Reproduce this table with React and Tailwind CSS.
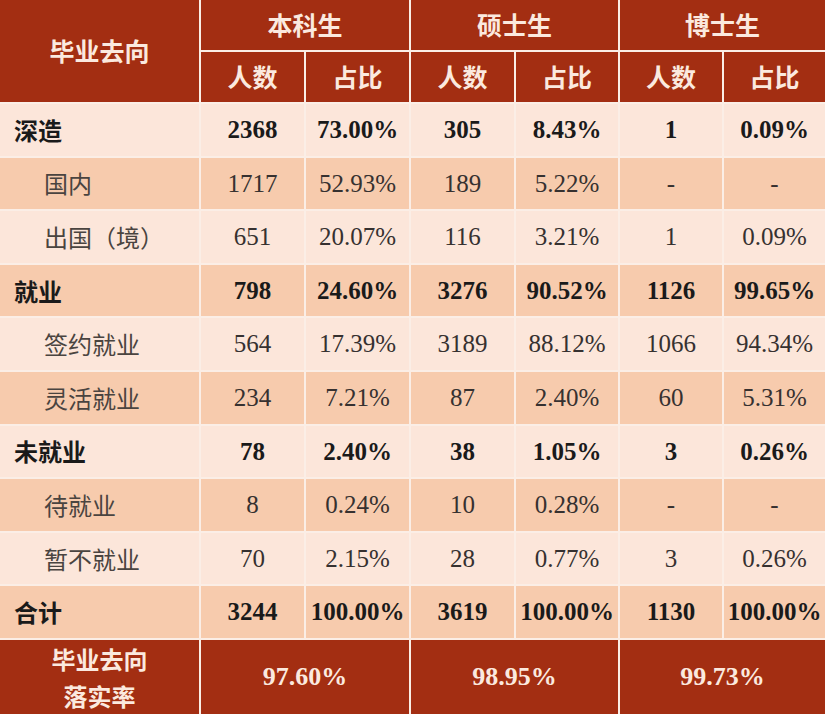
import React from "react";

const rows = [
  { label: "深造", bold: true, v: ["2368", "73.00%", "305", "8.43%", "1", "0.09%"] },
  { label: "国内", v: ["1717", "52.93%", "189", "5.22%", "-", "-"] },
  { label: "出国（境）", v: ["651", "20.07%", "116", "3.21%", "1", "0.09%"] },
  { label: "就业", bold: true, v: ["798", "24.60%", "3276", "90.52%", "1126", "99.65%"] },
  { label: "签约就业", v: ["564", "17.39%", "3189", "88.12%", "1066", "94.34%"] },
  { label: "灵活就业", v: ["234", "7.21%", "87", "2.40%", "60", "5.31%"] },
  { label: "未就业", bold: true, v: ["78", "2.40%", "38", "1.05%", "3", "0.26%"] },
  { label: "待就业", v: ["8", "0.24%", "10", "0.28%", "-", "-"] },
  { label: "暂不就业", v: ["70", "2.15%", "28", "0.77%", "3", "0.26%"] },
  { label: "合计", bold: true, v: ["3244", "100.00%", "3619", "100.00%", "1130", "100.00%"] },
];

const cjk = "font-['Noto_Sans_CJK_SC',sans-serif]";
const serif = "font-['Liberation_Serif','Noto_Sans_CJK_SC',serif]";

export default function App() {
  return (
    <div className="w-[825px] h-[714px] overflow-hidden bg-[#fbeee6]">
      <div className="grid grid-cols-[199px_103px_103px_103px_102px_102px_101px] grid-rows-[50px_50px_repeat(10,51.6px)_74px] gap-[2px]">
        <div className={`row-span-2 bg-[#a32e12] flex items-center justify-center text-[25px] font-bold text-[#fbe9df] ${cjk}`}>
          毕业去向
        </div>
        {["本科生", "硕士生", "博士生"].map((t) => (
          <div key={t} className={`col-span-2 bg-[#a32e12] flex items-center justify-center text-[25px] font-bold text-[#fbe9df] ${cjk}`}>
            {t}
          </div>
        ))}
        {[0, 1, 2, 3, 4, 5].map((i) => (
          <div key={i} className={`bg-[#a32e12] flex items-center justify-center text-[25px] font-bold text-[#fbe9df] ${cjk}`}>
            {i % 2 === 0 ? "人数" : "占比"}
          </div>
        ))}
        {rows.map((r, ri) => {
          const bg = ri % 2 === 0 ? "bg-[#fce6da]" : "bg-[#f7cbad]";
          return (
            <React.Fragment key={ri}>
              <div
                className={`${bg} flex items-center text-[24px] ${cjk} ${
                  r.bold ? "pl-[14px] font-bold text-[#1a1a1a]" : "pl-[44px] font-normal text-[#4a4440]"
                }`}
              >
                {r.label}
              </div>
              {r.v.map((x, ci) => (
                <div
                  key={ci}
                  className={`${bg} flex items-center justify-center text-[25px] ${serif} ${
                    r.bold ? "font-bold text-[#1a1a1a]" : "font-normal text-[#363130]"
                  }`}
                >
                  {x}
                </div>
              ))}
            </React.Fragment>
          );
        })}
        <div className={`bg-[#a32e12] flex flex-col items-center justify-center text-[24px] leading-[37px] font-bold text-[#fbe9df] ${cjk}`}>
          <span>毕业去向</span>
          <span>落实率</span>
        </div>
        {["97.60%", "98.95%", "99.73%"].map((t) => (
          <div key={t} className={`col-span-2 bg-[#a32e12] flex items-center justify-center text-[26px] font-bold text-[#fbe9df] ${serif}`}>
            {t}
          </div>
        ))}
      </div>
    </div>
  );
}
